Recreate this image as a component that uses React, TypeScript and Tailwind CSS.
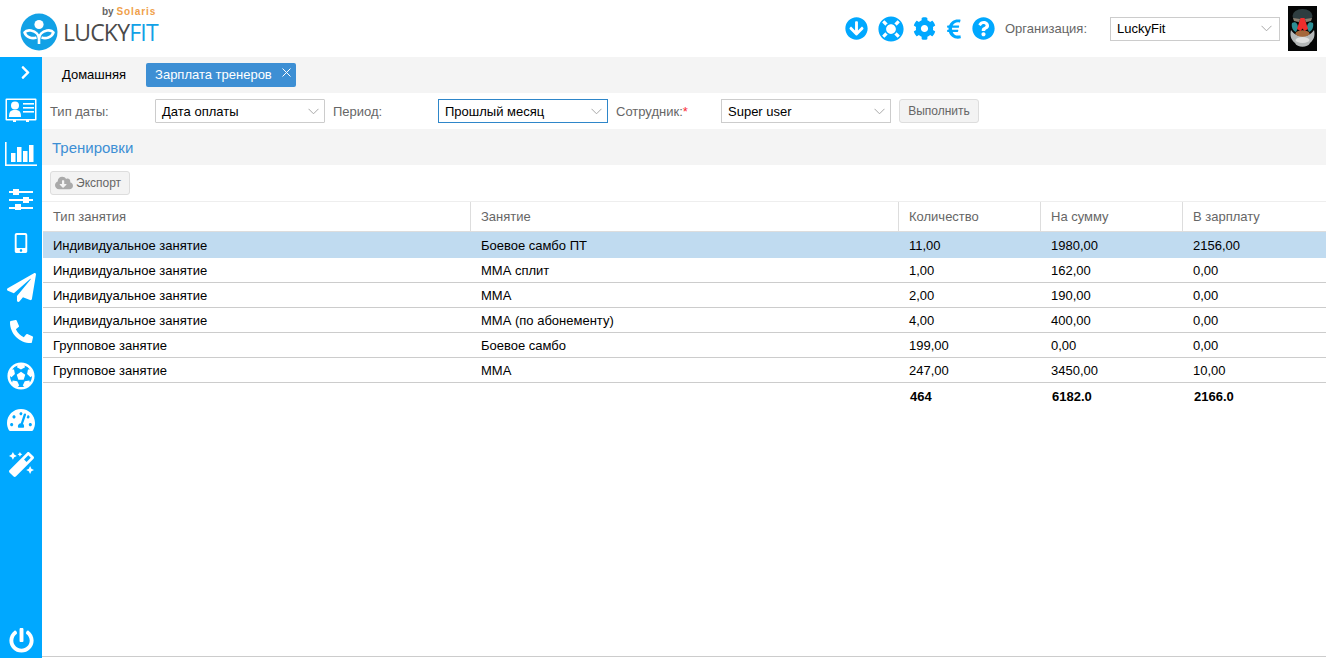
import React from "react";
import {
  FaArrowCircleDown, FaLifeRing, FaCog, FaEuroSign, FaQuestionCircle, FaChevronRight,
  FaMobileAlt, FaPaperPlane, FaPhoneAlt, FaFutbol, FaTachometerAlt, FaMagic, FaPowerOff, FaCloudDownloadAlt,
} from "react-icons/fa";

function Chevron() {
  return (
    <svg width="11" height="7" viewBox="0 0 11 7" fill="none" stroke="#a8a8a8" strokeWidth="1" className="shrink-0">
      <path d="M0.5 0.8 L5.5 5.8 L10.5 0.8" />
    </svg>
  );
}

function Select({ value, className }: { value: string; className: string }) {
  return (
    <div className={`h-6 flex items-center justify-between bg-white border pl-[6px] pr-[5px] text-black ${className}`}>
      <span>{value}</span>
      <Chevron />
    </div>
  );
}

function Logo() {
  return (
    <div className="relative w-[160px] h-[57px]">
      <svg className="absolute left-[20px] top-[13px]" width="38" height="38" viewBox="0 0 38 38">
        <circle cx="19" cy="19" r="18.5" fill="#12a1e6" />
        <circle cx="19" cy="11.5" r="4.6" fill="#fff" />
        <path d="M19 31 V26 C19 22 16 18.5 11 17.5 C8 17 5.5 18 4.5 19.5 C6.5 24.5 12 26 16.5 24.5 M19 26 C19 22 22 18.5 27 17.5 C30 17 32.5 18 33.5 19.5 C31.5 24.5 26 26 21.5 24.5" fill="none" stroke="#fff" strokeWidth="2.6" strokeLinejoin="round" />
      </svg>
      <div className="absolute left-[63px] top-[19px] text-[23px] leading-[26px] tracking-[-0.8px] font-['Open_Sans','Liberation_Sans',sans-serif]">
        <span className="text-[#4a4a4a]">LUCKY</span><span className="text-[#12a1e6]">FIT</span>
      </div>
      <div className="absolute left-[102px] top-[6px] text-[10px] leading-[11px] font-bold whitespace-nowrap">
        <span className="text-[#666]">by </span><span className="text-[#f0a04a] tracking-[0.9px]">Solaris</span>
      </div>
    </div>
  );
}

function Avatar() {
  return (
    <svg width="29" height="45" viewBox="0 0 29 45" className="block">
      <defs>
        <filter id="av" x="-20%" y="-20%" width="140%" height="140%">
          <feGaussianBlur stdDeviation="0.7" />
        </filter>
      </defs>
      <rect width="29" height="45" fill="#050606" />
      <g filter="url(#av)">
        <ellipse cx="14.5" cy="10" rx="10" ry="7" fill="#2e3d3f" />
        <path d="M5 12 L12 13 L11 16 L6 15Z M24 12 L17 13 L18 16 L23 15Z" fill="#8c7f70" />
        <path d="M4 17 C8 15 10 18 10 22 L8 26 C5 25 3 21 4 17Z M25 17 C21 15 19 18 19 22 L21 26 C24 25 26 21 25 17Z" fill="#2d8f96" />
        <path d="M7 37 C2 33 2 28 3 24 C6 28 9 30 14.5 30 C20 30 23 28 26 24 C27 28 27 33 22 37 C20 42 9 42 7 37Z" fill="#b4b8b8" />
        <ellipse cx="14.5" cy="27.5" rx="7" ry="3.2" fill="#a5683a" />
        <ellipse cx="14.5" cy="34" rx="7" ry="3" fill="#dfe0df" />
      </g>
      <path d="M12.5 12 L16.5 12 L20 23 L16.5 25 L14.5 22.5 L12.5 25 L9 23Z" fill="#ee2d2d" />
    </svg>
  );
}

function CardIcon() {
  return (
    <svg width="32" height="24" viewBox="0 0 32 24" fill="#fff" className="block">
      <path fillRule="evenodd" d="M1.5 0.5 H30.5 A1 1 0 0 1 31.5 1.5 V21.5 A1 1 0 0 1 30.5 22.5 H1.5 A1 1 0 0 1 0.5 21.5 V1.5 A1 1 0 0 1 1.5 0.5Z M2 2 V21 H30 V2Z" />
      <rect x="8" y="21" width="3" height="3" />
      <rect x="21" y="21" width="3" height="3" />
      <circle cx="10" cy="7.5" r="4" />
      <path d="M4 19 C4 13 6 12 10 12 C14 12 16 13 16 19Z" />
      <rect x="18" y="5" width="11" height="1.6" />
      <rect x="18" y="9" width="11" height="1.6" />
      <rect x="18" y="13" width="11" height="1.6" />
    </svg>
  );
}

function BarsIcon() {
  return (
    <svg width="32" height="24" viewBox="0 0 32 24" fill="#fff" className="block">
      <rect x="0" y="0" width="1.6" height="24" />
      <rect x="0" y="22.4" width="32" height="1.6" />
      <rect x="6" y="11" width="4.5" height="9" />
      <rect x="12" y="5" width="4.5" height="15" />
      <rect x="18" y="9" width="4.5" height="11" />
      <rect x="24" y="3" width="4.5" height="17" />
    </svg>
  );
}

function SlidersIcon() {
  return (
    <svg width="24" height="22" viewBox="0 0 24 22" fill="#fff" className="block">
      <rect x="0" y="3" width="24" height="2" />
      <rect x="0" y="11" width="24" height="2" />
      <rect x="0" y="19" width="24" height="2" />
      <rect x="4" y="1" width="6" height="6" />
      <rect x="14" y="9" width="6" height="6" />
      <rect x="6" y="16" width="6" height="6" />
    </svg>
  );
}

function Slot({ children }: { children: React.ReactNode }) {
  return <div className="h-[44.25px] shrink-0 w-full flex items-center justify-center">{children}</div>;
}

const rows = [
  ["Индивидуальное занятие", "Боевое самбо ПТ", "11,00", "1980,00", "2156,00"],
  ["Индивидуальное занятие", "ММА сплит", "1,00", "162,00", "0,00"],
  ["Индивидуальное занятие", "ММА", "2,00", "190,00", "0,00"],
  ["Индивидуальное занятие", "ММА (по абонементу)", "4,00", "400,00", "0,00"],
  ["Групповое занятие", "Боевое самбо", "199,00", "0,00", "0,00"],
  ["Групповое занятие", "ММА", "247,00", "3450,00", "10,00"],
];

const cols = "grid grid-cols-[428px_428px_142px_142px_1fr]";

export default function App() {
  return (
    <div className="w-[1326px] h-[658px] overflow-hidden bg-white flex flex-col text-[13px] leading-[15px] font-['Liberation_Sans',Arial,sans-serif]">
      <header className="h-[57px] shrink-0 flex items-center">
        <Logo />
        <div className="ml-auto flex items-center text-[#00a8ff]">
          <FaArrowCircleDown size={23} className="mr-[10px]" />
          <FaLifeRing size={26} className="mr-[9px]" />
          <FaCog size={23} className="mr-[10px]" />
          <FaEuroSign size={16} className="mr-[10px] h-[22px]" />
          <FaQuestionCircle size={23} className="mr-[10px]" />
          <span className="text-[#666] mr-[23px]">Организация:</span>
          <Select value="LuckyFit" className="w-[170px] border-[#ccc] mr-[8px] pr-[7px]" />
          <div className="mr-[9px]"><Avatar /></div>
        </div>
      </header>
      <div className="flex-1 flex min-h-0">
        <aside className="w-[42px] shrink-0 bg-[#00a8ff] flex flex-col items-center text-white">
          <div className="h-[31px] shrink-0 flex items-center pl-[9px]">
            <FaChevronRight size={15} />
          </div>
          <Slot><CardIcon /></Slot>
          <Slot><BarsIcon /></Slot>
          <Slot><SlidersIcon /></Slot>
          <Slot><FaMobileAlt size={20} /></Slot>
          <Slot><FaPaperPlane size={29} /></Slot>
          <Slot><FaPhoneAlt size={23} /></Slot>
          <Slot><FaFutbol size={28} /></Slot>
          <Slot><FaTachometerAlt size={28} /></Slot>
          <Slot><FaMagic size={25} /></Slot>
          <FaPowerOff size={25} className="mt-auto mb-[5px]" />
        </aside>
        <main className="flex-1 min-w-0 flex flex-col">
          <nav className="h-9 shrink-0 bg-[#f4f4f4] flex items-center pl-[20px] pb-[1px]">
            <span className="text-black mr-[20px]">Домашняя</span>
            <div className="relative h-6 w-[150px] bg-[#3d8fd4] rounded-[2px] text-white pl-[9px] flex items-center">
              Зарплата тренеров
              <svg width="9" height="9" viewBox="0 0 9 9" stroke="#fff" strokeWidth="1" className="absolute right-[5px] top-[5px]">
                <path d="M0.5 0.5 L8.5 8.5 M8.5 0.5 L0.5 8.5" />
              </svg>
            </div>
          </nav>
          <div className="h-9 shrink-0 flex items-center text-[#666]">
            <span className="ml-[8px] w-[105px]">Тип даты:</span>
            <Select value="Дата оплаты" className="w-[170px] border-[#ccc] rounded-[1px]" />
            <span className="ml-[8px] w-[105px]">Период:</span>
            <Select value="Прошлый месяц" className="w-[170px] border-[#2e86c9]" />
            <span className="ml-[8px] w-[105px]">Сотрудник:<span className="text-red-500">*</span></span>
            <Select value="Super user" className="w-[170px] border-[#ccc]" />
            <button className="ml-[8px] h-6 w-[80px] bg-[#f3f3f3] border border-[#ddd] rounded-[3px] text-[12px] text-[#666]">Выполнить</button>
          </div>
          <div className="h-9 shrink-0 bg-[#f4f4f4] flex items-center pl-[10px] text-[15px] text-[#3d8fd4]">Тренировки</div>
          <div className="h-9 shrink-0 flex items-center pl-[8px]">
            <button className="h-6 w-[80px] flex items-center pl-[4px] gap-[3px] bg-[#f3f3f3] border border-[#ddd] rounded-[3px] text-[12px] text-[#666]">
              <FaCloudDownloadAlt size={18} className="text-[#aaa]" />Экспорт
            </button>
          </div>
          <div className="flex-1 min-h-0 mb-[1px] border-t border-b border-t-[#eee] border-b-[#ccc] flex flex-col pl-[1px]">
            <div className={`${cols} h-[30px] shrink-0 border-b border-[#ddd] text-[#666]`}>
              {["Тип занятия", "Занятие", "Количество", "На сумму", "В зарплату"].map((h, i) => (
                <div key={h} className={`pl-[10px] flex items-center ${i < 4 ? "border-r border-[#ddd]" : ""}`}>{h}</div>
              ))}
            </div>
            {rows.map((r, i) => (
              <div key={i} className={`${cols} text-black ${i === 0 ? "h-[26px] bg-[#c0dbf0]" : "h-[25px] border-b border-[#ccc]"}`}>
                {r.map((c, j) => (
                  <div key={j} className="pl-[10px] flex items-center">{c}</div>
                ))}
              </div>
            ))}
            <div className={`${cols} h-[27px] font-bold text-black`}>
              <div /><div />
              <div className="pl-[11px] flex items-center">464</div>
              <div className="pl-[11px] flex items-center">6182.0</div>
              <div className="pl-[11px] flex items-center">2166.0</div>
            </div>
          </div>
        </main>
      </div>
    </div>
  );
}
